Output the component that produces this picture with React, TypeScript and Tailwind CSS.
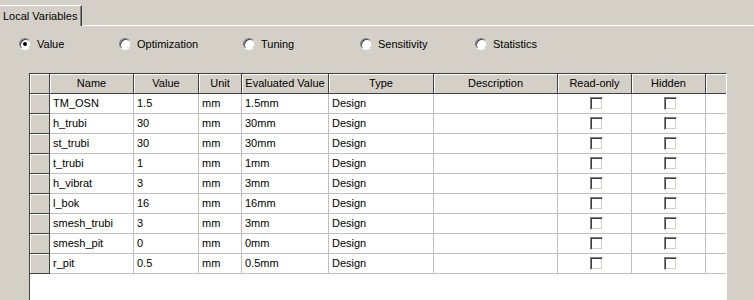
import React from 'react';

const rows = [
  { name: 'TM_OSN', value: '1.5', evaluated: '1.5mm' },
  { name: 'h_trubi', value: '30', evaluated: '30mm' },
  { name: 'st_trubi', value: '30', evaluated: '30mm' },
  { name: 't_trubi', value: '1', evaluated: '1mm' },
  { name: 'h_vibrat', value: '3', evaluated: '3mm' },
  { name: 'l_bok', value: '16', evaluated: '16mm' },
  { name: 'smesh_trubi', value: '3', evaluated: '3mm' },
  { name: 'smesh_pit', value: '0', evaluated: '0mm' },
  { name: 'r_pit', value: '0.5', evaluated: '0.5mm' },
];

const radios = [
  { label: 'Value', width: 'w-[100px]', checked: true },
  { label: 'Optimization', width: 'w-[124px]', checked: false },
  { label: 'Tuning', width: 'w-[117px]', checked: false },
  { label: 'Sensitivity', width: 'w-[115px]', checked: false },
  { label: 'Statistics', width: 'w-[100px]', checked: false },
];

function Radio({ label, width, checked }: { label: string; width: string; checked: boolean }) {
  return (
    <div className={`flex items-center ${width}`}>
      <span className="relative w-[12px] h-[12px] rounded-full bg-white border border-t-[#808080] border-l-[#808080] border-b-white border-r-[#d4d0c8] shadow-[inset_1px_1px_0_#404040] flex items-center justify-center">
        {checked && <span className="w-[4px] h-[4px] rounded-full bg-black" />}
      </span>
      <span className="ml-[6px]">{label}</span>
    </div>
  );
}

function Checkbox() {
  return (
    <span className="block w-[13px] h-[13px] bg-white border border-t-[#808080] border-l-[#808080] border-b-white border-r-white shadow-[inset_1px_1px_0_#404040,inset_-1px_-1px_0_#d4d0c8]" />
  );
}

const head = 'h-[20px] shrink-0 flex items-center justify-center bg-[#d4d0c8] border-r border-b border-[#404040] shadow-[inset_1px_1px_0_#ffffff]';
const cell = 'h-[20px] shrink-0 flex items-center pl-[3px] bg-white border-r border-b border-[#c0c0c0] whitespace-nowrap overflow-hidden';

export default function App() {
  return (
    <div className="w-[754px] h-[300px] overflow-hidden bg-[#d4d0c8] text-[11px] text-black leading-none" style={{ fontFamily: '"Liberation Sans", Arial, sans-serif' }}>
      {/* tab strip */}
      <div className="flex items-end pt-[5px] h-[26px]">
        <div className="h-[21px] w-[82px] flex items-center pl-[3px] border-t border-white border-r border-r-[#404040] shadow-[inset_-1px_0_0_#808080]">
          Local Variables
        </div>
        <div className="flex-1 h-px bg-white" />
      </div>

      {/* radio options */}
      <div className="flex items-center h-[16px] mt-[10px] pl-[19px]">
        {radios.map((r) => (
          <Radio key={r.label} label={r.label} width={r.width} checked={r.checked} />
        ))}
      </div>

      {/* grid */}
      <div className="ml-[29px] mt-[21px] w-[698px] h-[227px] bg-white border-l border-t border-[#404040] border-r border-r-white overflow-hidden">
        <div className="flex">
          <div className={`${head} w-[20px]`} />
          <div className={`${head} w-[84px]`}>Name</div>
          <div className={`${head} w-[65px]`}>Value</div>
          <div className={`${head} w-[43px]`}>Unit</div>
          <div className={`${head} w-[87px]`}>Evaluated Value</div>
          <div className={`${head} w-[105px]`}>Type</div>
          <div className={`${head} w-[124px]`}>Description</div>
          <div className={`${head} w-[74px]`}>Read-only</div>
          <div className={`${head} w-[74px]`}>Hidden</div>
          <div className="h-[20px] w-[20px] shrink-0 bg-[#d4d0c8] border-b border-[#404040] shadow-[inset_1px_1px_0_#ffffff]" />
        </div>
        {rows.map((r) => (
          <div key={r.name} className="flex">
            <div className={`${head} w-[20px]`} />
            <div className={`${cell} w-[84px]`}>{r.name}</div>
            <div className={`${cell} w-[65px]`}>{r.value}</div>
            <div className={`${cell} w-[43px]`}>mm</div>
            <div className={`${cell} w-[87px]`}>{r.evaluated}</div>
            <div className={`${cell} w-[105px]`}>Design</div>
            <div className={`${cell} w-[124px]`} />
            <div className={`${cell} w-[74px] justify-center pl-0`}>
              <Checkbox />
            </div>
            <div className={`${cell} w-[74px] justify-center pl-0`}>
              <Checkbox />
            </div>
            <div className="h-[20px] w-[20px] shrink-0 bg-white border-b border-[#c0c0c0]" />
          </div>
        ))}
      </div>
    </div>
  );
}
